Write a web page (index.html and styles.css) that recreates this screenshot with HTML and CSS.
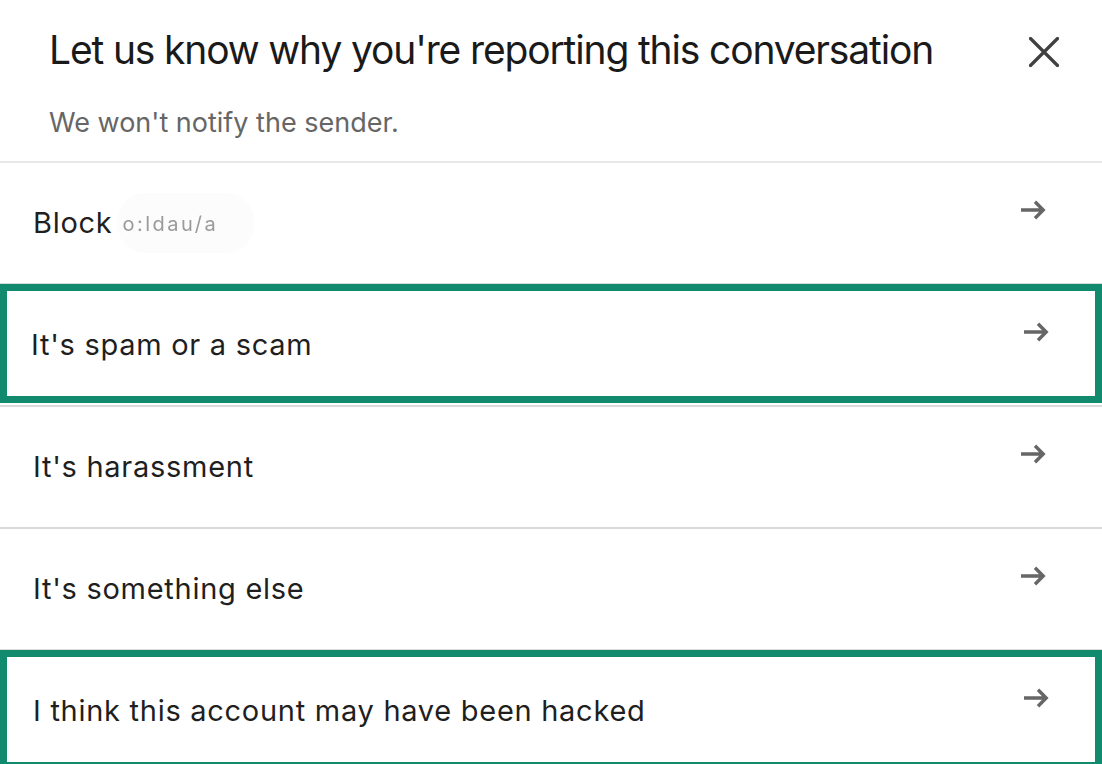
FILE: index.html
```html
<!DOCTYPE html>
<html lang="en">
<head>
<meta charset="utf-8">
<title>Report conversation</title>
<link rel="stylesheet" href="styles.css">
</head>
<body>
<div class="dialog">
  <header class="dialog-header">
    <div class="header-top">
      <h1 class="title">Let us know why you're reporting this conversation</h1>
      <button class="close" aria-label="Dismiss">
        <svg width="30" height="30" viewBox="0 0 30 30"><path d="M1.5 1.5 L28.5 28.5 M28.5 1.5 L1.5 28.5" stroke="#404040" stroke-width="3.2" stroke-linecap="round" fill="none"/></svg>
      </button>
    </div>
    <p class="subtitle">We won't notify the sender.</p>
  </header>
  <ul class="options">
    <li class="option">
      <span class="label">Block <span class="redacted">o:ldau/a</span></span>
      <svg class="arrow" width="26" height="20" viewBox="0 0 26 20"><path d="M1 10 H23.5 M15 1.8 L23.2 10 L15 18.2" stroke="#666" stroke-width="3.4" fill="none"/></svg>
    </li>
    <li class="option focused tight">
      <span class="label">It's spam or a scam</span>
      <svg class="arrow" width="26" height="20" viewBox="0 0 26 20"><path d="M1 10 H23.5 M15 1.8 L23.2 10 L15 18.2" stroke="#666" stroke-width="3.4" fill="none"/></svg>
    </li>
    <li class="option">
      <span class="label">It's harassment</span>
      <svg class="arrow" width="26" height="20" viewBox="0 0 26 20"><path d="M1 10 H23.5 M15 1.8 L23.2 10 L15 18.2" stroke="#666" stroke-width="3.4" fill="none"/></svg>
    </li>
    <li class="option">
      <span class="label">It's something else</span>
      <svg class="arrow" width="26" height="20" viewBox="0 0 26 20"><path d="M1 10 H23.5 M15 1.8 L23.2 10 L15 18.2" stroke="#666" stroke-width="3.4" fill="none"/></svg>
    </li>
    <li class="option focused">
      <span class="label">I think this account may have been hacked</span>
      <svg class="arrow" width="26" height="20" viewBox="0 0 26 20"><path d="M1 10 H23.5 M15 1.8 L23.2 10 L15 18.2" stroke="#666" stroke-width="3.4" fill="none"/></svg>
    </li>
  </ul>
</div>
</body>
</html>
```
FILE: styles.css
```css
* { box-sizing: border-box; }
html, body { margin: 0; padding: 0; background: #fff; }
body { font-family: Inter, "Liberation Sans", sans-serif; overflow: hidden; }

.dialog { width: 1102px; }

.dialog-header {
  padding: 26px 43px 20px 49px;
  border-bottom: 2px solid #e8e8e8;
}
.header-top {
  display: flex;
  align-items: center;
  justify-content: space-between;
}
.title {
  margin: 0;
  font-size: 39px;
  line-height: 48px;
  font-weight: 400;
  letter-spacing: -1.15px;
  color: #1a1a1a;
}
.close {
  border: 0;
  background: none;
  padding: 0;
  width: 30px;
  height: 30px;
  margin-top: 4px;
  display: flex;
}
.subtitle {
  margin: 31px 0 0;
  font-size: 27px;
  line-height: 36px;
  color: #666;
}

.options { list-style: none; margin: 0; padding: 0; }
.option {
  position: relative;
  display: flex;
  align-items: center;
  justify-content: space-between;
  height: 122px;
  padding: 0 56px 0 33px;
  border-bottom: 2px solid #dadada;
}
.label {
  font-size: 29px;
  line-height: 34px;
  letter-spacing: 0.72px;
  color: #1f1f1f;
  display: flex;
  align-items: center;
}
.redacted {
  margin-left: 6px;
  padding: 14px 36px 12px 4px;
  border-radius: 27px;
  background: #fcfcfc;
  font-size: 20px;
  letter-spacing: 2.5px;
  color: #9a9a9a;
  filter: blur(0.5px);
}
.arrow { align-self: flex-start; margin-top: 37px; }

.option.focused::after {
  content: "";
  position: absolute;
  left: 0; right: 0; top: -1px; bottom: 2px;
  border: 7px solid #128a6d;
  pointer-events: none;
}
.option.tight .label { margin-left: -2px; }
.option.focused .arrow { margin-right: -3px; }
```
